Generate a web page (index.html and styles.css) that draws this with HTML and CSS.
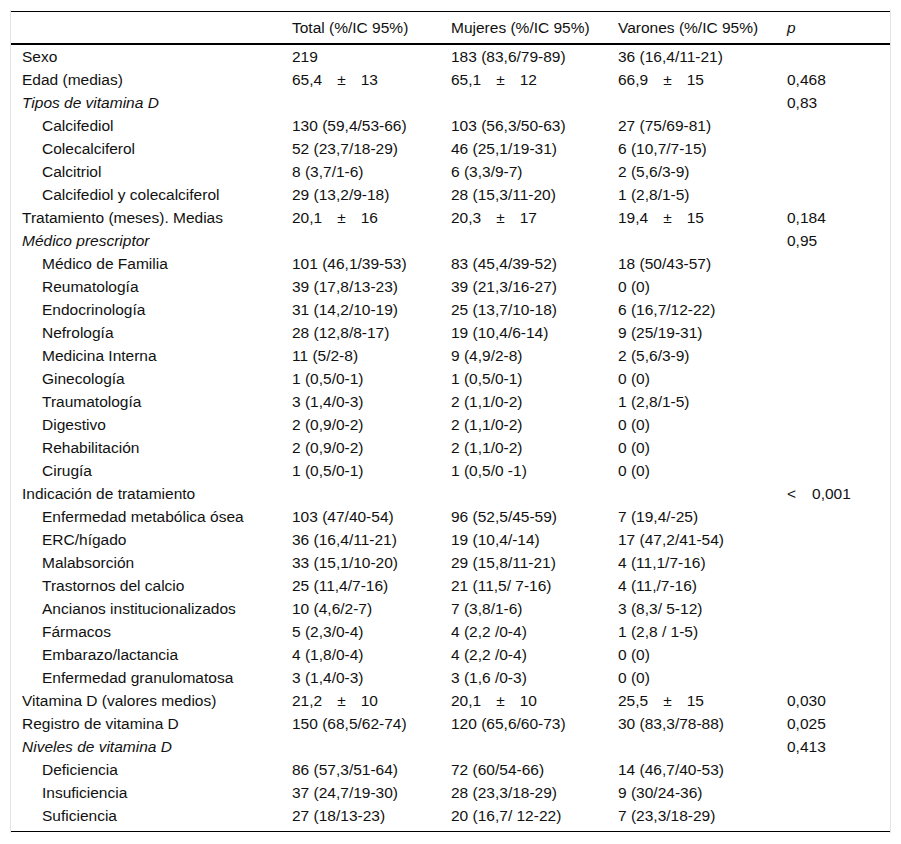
FILE: index.html
```html
<!DOCTYPE html>
<html lang="es">
<head>
<meta charset="utf-8">
<title>Tabla vitamina D</title>
<link rel="stylesheet" href="styles.css">
</head>
<body>
<div class="wrap">
<table class="tbl">
<colgroup>
<col class="c1"><col class="c2"><col class="c3"><col class="c4"><col class="c5">
</colgroup>
<thead>
<tr><th></th><th>Total (%/IC 95%)</th><th>Mujeres (%/IC 95%)</th><th>Varones (%/IC 95%)</th><th><i>p</i></th></tr>
</thead>
<tbody>
<tr><td>Sexo</td><td>219</td><td>183 (83,6/79-89)</td><td>36 (16,4/11-21)</td><td></td></tr>
<tr><td>Edad (medias)</td><td>65,4<span class="pm">±</span>13</td><td>65,1<span class="pm">±</span>12</td><td>66,9<span class="pm">±</span>15</td><td>0,468</td></tr>
<tr><td><i>Tipos de vitamina D</i></td><td></td><td></td><td></td><td>0,83</td></tr>
<tr><td class="in">Calcifediol</td><td>130 (59,4/53-66)</td><td>103 (56,3/50-63)</td><td>27 (75/69-81)</td><td></td></tr>
<tr><td class="in">Colecalciferol</td><td>52 (23,7/18-29)</td><td>46 (25,1/19-31)</td><td>6 (10,7/7-15)</td><td></td></tr>
<tr><td class="in">Calcitriol</td><td>8 (3,7/1-6)</td><td>6 (3,3/9-7)</td><td>2 (5,6/3-9)</td><td></td></tr>
<tr><td class="in">Calcifediol y colecalciferol</td><td>29 (13,2/9-18)</td><td>28 (15,3/11-20)</td><td>1 (2,8/1-5)</td><td></td></tr>
<tr><td>Tratamiento (meses). Medias</td><td>20,1<span class="pm">±</span>16</td><td>20,3<span class="pm">±</span>17</td><td>19,4<span class="pm">±</span>15</td><td>0,184</td></tr>
<tr><td><i>Médico prescriptor</i></td><td></td><td></td><td></td><td>0,95</td></tr>
<tr><td class="in">Médico de Familia</td><td>101 (46,1/39-53)</td><td>83 (45,4/39-52)</td><td>18 (50/43-57)</td><td></td></tr>
<tr><td class="in">Reumatología</td><td>39 (17,8/13-23)</td><td>39 (21,3/16-27)</td><td>0 (0)</td><td></td></tr>
<tr><td class="in">Endocrinología</td><td>31 (14,2/10-19)</td><td>25 (13,7/10-18)</td><td>6 (16,7/12-22)</td><td></td></tr>
<tr><td class="in">Nefrología</td><td>28 (12,8/8-17)</td><td>19 (10,4/6-14)</td><td>9 (25/19-31)</td><td></td></tr>
<tr><td class="in">Medicina Interna</td><td>11 (5/2-8)</td><td>9 (4,9/2-8)</td><td>2 (5,6/3-9)</td><td></td></tr>
<tr><td class="in">Ginecología</td><td>1 (0,5/0-1)</td><td>1 (0,5/0-1)</td><td>0 (0)</td><td></td></tr>
<tr><td class="in">Traumatología</td><td>3 (1,4/0-3)</td><td>2 (1,1/0-2)</td><td>1 (2,8/1-5)</td><td></td></tr>
<tr><td class="in">Digestivo</td><td>2 (0,9/0-2)</td><td>2 (1,1/0-2)</td><td>0 (0)</td><td></td></tr>
<tr><td class="in">Rehabilitación</td><td>2 (0,9/0-2)</td><td>2 (1,1/0-2)</td><td>0 (0)</td><td></td></tr>
<tr><td class="in">Cirugía</td><td>1 (0,5/0-1)</td><td>1 (0,5/0 -1)</td><td>0 (0)</td><td></td></tr>
<tr><td>Indicación de tratamiento</td><td></td><td></td><td></td><td><span class="lt">&lt;</span>0,001</td></tr>
<tr><td class="in">Enfermedad metabólica ósea</td><td>103 (47/40-54)</td><td>96 (52,5/45-59)</td><td>7 (19,4/-25)</td><td></td></tr>
<tr><td class="in">ERC/hígado</td><td>36 (16,4/11-21)</td><td>19 (10,4/-14)</td><td>17 (47,2/41-54)</td><td></td></tr>
<tr><td class="in">Malabsorción</td><td>33 (15,1/10-20)</td><td>29 (15,8/11-21)</td><td>4 (11,1/7-16)</td><td></td></tr>
<tr><td class="in">Trastornos del calcio</td><td>25 (11,4/7-16)</td><td>21 (11,5/ 7-16)</td><td>4 (11,/7-16)</td><td></td></tr>
<tr><td class="in">Ancianos institucionalizados</td><td>10 (4,6/2-7)</td><td>7 (3,8/1-6)</td><td>3 (8,3/ 5-12)</td><td></td></tr>
<tr><td class="in">Fármacos</td><td>5 (2,3/0-4)</td><td>4 (2,2 /0-4)</td><td>1 (2,8 / 1-5)</td><td></td></tr>
<tr><td class="in">Embarazo/lactancia</td><td>4 (1,8/0-4)</td><td>4 (2,2 /0-4)</td><td>0 (0)</td><td></td></tr>
<tr><td class="in">Enfermedad granulomatosa</td><td>3 (1,4/0-3)</td><td>3 (1,6 /0-3)</td><td>0 (0)</td><td></td></tr>
<tr><td>Vitamina D (valores medios)</td><td>21,2<span class="pm">±</span>10</td><td>20,1<span class="pm">±</span>10</td><td>25,5<span class="pm">±</span>15</td><td>0,030</td></tr>
<tr><td>Registro de vitamina D</td><td>150 (68,5/62-74)</td><td>120 (65,6/60-73)</td><td>30 (83,3/78-88)</td><td>0,025</td></tr>
<tr><td><i>Niveles de vitamina D</i></td><td></td><td></td><td></td><td>0,413</td></tr>
<tr><td class="in">Deficiencia</td><td>86 (57,3/51-64)</td><td>72 (60/54-66)</td><td>14 (46,7/40-53)</td><td></td></tr>
<tr><td class="in">Insuficiencia</td><td>37 (24,7/19-30)</td><td>28 (23,3/18-29)</td><td>9 (30/24-36)</td><td></td></tr>
<tr class="last"><td class="in">Suficiencia</td><td>27 (18/13-23)</td><td>20 (16,7/ 12-22)</td><td>7 (23,3/18-29)</td><td></td></tr>
</tbody>
</table>
</div>
</body>
</html>
```

FILE: styles.css
```css
html, body {
  margin: 0;
  padding: 0;
  background: #fff;
}
body {
  font-family: "Liberation Sans", Arial, sans-serif;
  font-size: 15.5px;
  color: #111;
}
.wrap {
  margin: 10px 0 0 10px;
  width: 879px;
  border-left: 1px solid #e4e4e4;
  border-right: 1px solid #e4e4e4;
  padding: 1px 0 1px;
}
.tbl {
  width: 879px;
  table-layout: fixed;
  border-collapse: collapse;
  border-top: 1px solid #000;
  border-bottom: 1px solid #000;
}
.c1 { width: 270px; }
.c2 { width: 159px; }
.c3 { width: 167px; }
.c4 { width: 169px; }
.c5 { width: 114px; }
.tbl th {
  font-weight: normal;
  text-align: left;
  height: 31px;
  padding: 0 0 0 11px;
  border-bottom: 2px solid #000;
  vertical-align: middle;
  white-space: nowrap;
}
.tbl td {
  height: 23px;
  padding: 0 0 0 11px;
  vertical-align: middle;
  white-space: nowrap;
  line-height: 18px;
}
.tbl td.in {
  padding-left: 31px;
}
.tbl tr.last td {
  padding-bottom: 4px;
}
.pm {
  display: inline-block;
  margin: 0 15px;
}
.lt {
  display: inline-block;
  margin-right: 16px;
}
```
